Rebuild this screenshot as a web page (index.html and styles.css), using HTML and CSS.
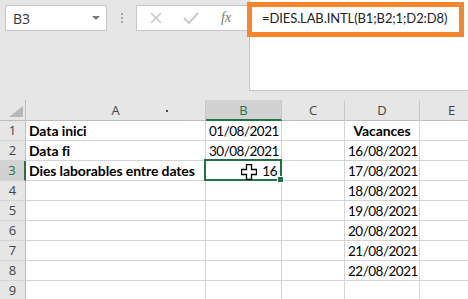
FILE: index.html
```html
<!DOCTYPE html>
<html lang="ca">
<head>
  <meta charset="UTF-8">
  <title>Dies laborables</title>
  <link rel="stylesheet" href="styles.css">
</head>
<body>
  <div class="toolbar">
    <div class="name-box">
      <span>B3</span>
      <span class="caret"></span>
    </div>
    <div class="grip"><i></i><i></i><i></i></div>
    <div class="fx-box">
      <svg class="icon" width="12" height="12" viewBox="0 0 12 12"><path d="M1 1 L11 11 M11 1 L1 11" stroke="#c8c8c8" stroke-width="1.6" fill="none"/></svg>
      <svg class="icon" width="16" height="12" viewBox="0 0 16 12"><path d="M1 6 L6 11 L15 1" stroke="#c8c8c8" stroke-width="2" fill="none"/></svg>
      <span class="fx">fx</span>
    </div>
    <div class="formula">=DIES.LAB.INTL(B1;B2;1;D2:D8)</div>
    <div class="highlight"></div>
  </div>

  <div class="sheet">
    <div class="corner"><svg width="14" height="11" viewBox="0 0 14 11"><path d="M14 0 L14 11 L0 11 Z" fill="#b7b7b7"/></svg></div>
    <div class="col-head">A<span class="speck"></span></div>
    <div class="col-head active">B</div>
    <div class="col-head">C</div>
    <div class="col-head">D</div>
    <div class="col-head">E</div>

    <div class="row-head">1</div>
    <div class="cell bold">Data inici</div>
    <div class="cell num">01/08/2021</div>
    <div class="cell"></div>
    <div class="cell bold center">Vacances</div>
    <div class="cell"></div>

    <div class="row-head">2</div>
    <div class="cell bold">Data fi</div>
    <div class="cell num">30/08/2021</div>
    <div class="cell"></div>
    <div class="cell num">16/08/2021</div>
    <div class="cell"></div>

    <div class="row-head active">3</div>
    <div class="cell bold">Dies laborables entre dates</div>
    <div class="cell num selected">
      <svg class="cursor" width="16" height="16" viewBox="0 0 16 16"><path d="M5.5 0.5 H10.5 V5.5 H15.5 V10.5 H10.5 V15.5 H5.5 V10.5 H0.5 V5.5 H5.5 Z" fill="#fff" stroke="#000" stroke-width="1.3"/></svg>
      16
    </div>
    <div class="cell"></div>
    <div class="cell num">17/08/2021</div>
    <div class="cell"></div>

    <div class="row-head">4</div>
    <div class="cell"></div>
    <div class="cell"></div>
    <div class="cell"></div>
    <div class="cell num">18/08/2021</div>
    <div class="cell"></div>

    <div class="row-head">5</div>
    <div class="cell"></div>
    <div class="cell"></div>
    <div class="cell"></div>
    <div class="cell num">19/08/2021</div>
    <div class="cell"></div>

    <div class="row-head">6</div>
    <div class="cell"></div>
    <div class="cell"></div>
    <div class="cell"></div>
    <div class="cell num">20/08/2021</div>
    <div class="cell"></div>

    <div class="row-head">7</div>
    <div class="cell"></div>
    <div class="cell"></div>
    <div class="cell"></div>
    <div class="cell num">21/08/2021</div>
    <div class="cell"></div>

    <div class="row-head">8</div>
    <div class="cell"></div>
    <div class="cell"></div>
    <div class="cell"></div>
    <div class="cell num">22/08/2021</div>
    <div class="cell"></div>

    <div class="row-head">9</div>
    <div class="cell"></div>
    <div class="cell"></div>
    <div class="cell"></div>
    <div class="cell"></div>
    <div class="cell"></div>
  </div>
</body>
</html>
```

FILE: styles.css
```css
body {
  margin: 0;
  width: 468px;
  height: 299px;
  overflow: hidden;
  background-color: #e6e6e6;
  font-family: 'Lato', 'Liberation Sans', sans-serif;
  color: #000;
}
.toolbar {
  position: relative;
  display: flex;
  align-items: flex-start;
  height: 100px;
}
.name-box {
  display: flex;
  align-items: center;
  justify-content: space-between;
  box-sizing: border-box;
  width: 102px;
  height: 26px;
  margin: 5px 0 0 5px;
  padding: 0 6px 0 7px;
  background-color: #fff;
  border: 1px solid #c6c6c6;
  font-family: 'Open Sans', sans-serif;
  font-size: 14px;
  color: #333;
}
.caret {
  width: 0;
  height: 0;
  border-left: 4px solid transparent;
  border-right: 4px solid transparent;
  border-top: 4px solid #7a7a7a;
}
.grip {
  display: flex;
  flex-direction: column;
  gap: 2px;
  margin: 13px 13px 0 14px;
}
.grip i {
  width: 2px;
  height: 2px;
  background-color: #a6a6a6;
}
.fx-box {
  display: flex;
  align-items: center;
  gap: 21px;
  box-sizing: border-box;
  width: 113px;
  height: 26px;
  margin-top: 5px;
  padding-left: 13px;
  background-color: #fff;
  border: 1px solid #c6c6c6;
  border-right: none;
}
.fx {
  font-family: 'Liberation Serif', serif;
  font-style: italic;
  font-size: 14px;
  color: #777;
  margin-left: 1px;
}
.formula {
  flex: 1;
  box-sizing: border-box;
  height: 91px;
  padding: 10px 0 0 12px;
  background-color: #fff;
  border-left: 1px solid #c6c6c6;
  border-bottom: 1px solid #c6c6c6;
  font-size: 13px;
  letter-spacing: -0.1px;
  color: #222;
}
.highlight {
  position: absolute;
  left: 247px;
  top: 2px;
  width: 217px;
  height: 35px;
  box-sizing: border-box;
  border: 5px solid #f7852b;
}
.sheet {
  display: grid;
  grid-template-columns: 26px 180px 76px 63px 75px 64px;
  grid-template-rows: 21px repeat(9, 20px);
  font-size: 14px;
}
.corner, .col-head, .row-head {
  box-sizing: border-box;
  background-color: #e6e6e6;
  color: #444;
  font-family: 'Open Sans', sans-serif;
  font-size: 13px;
  text-align: center;
}
.corner {
  display: flex;
  align-items: flex-end;
  justify-content: flex-end;
  padding: 0 2px 3px 0;
  border-right: 1px solid #bdbdbd;
  border-bottom: 1px solid #bdbdbd;
}
.col-head {
  position: relative;
  line-height: 20px;
  border-right: 1px solid #c8c8c8;
  border-bottom: 1px solid #bdbdbd;
}
.col-head.active {
  background-color: #d2d2d2;
  color: #217346;
  border-bottom: 2px solid #217346;
}
.speck {
  position: absolute;
  top: 10px;
  left: 140px;
  width: 2px;
  height: 2px;
  background-color: #444;
}
.row-head {
  line-height: 19px;
  border-right: 1px solid #bdbdbd;
  border-bottom: 1px solid #d4d4d4;
}
.row-head.active {
  background-color: #d2d2d2;
  color: #217346;
  border-right: 2px solid #217346;
}
.cell {
  box-sizing: border-box;
  background-color: #fff;
  border-right: 1px solid #d4d4d4;
  border-bottom: 1px solid #d4d4d4;
  padding: 1px 3px 0;
  line-height: 18px;
  white-space: nowrap;
}
.bold {
  font-weight: bold;
  letter-spacing: -0.1px;
}
.center {
  text-align: center;
}
.num {
  text-align: right;
  font-size: 13.5px;
  letter-spacing: -0.5px;
  padding-right: 4px;
}
.selected {
  position: relative;
}
.selected::before {
  content: "";
  position: absolute;
  top: -2px;
  left: -2px;
  right: -1px;
  bottom: -1px;
  border: 2px solid #217346;
}
.selected::after {
  content: "";
  position: absolute;
  right: -3px;
  bottom: -3px;
  width: 5px;
  height: 5px;
  background-color: #217346;
  border: 1px solid #fff;
}
.cursor {
  position: absolute;
  left: 35px;
  top: 3px;
}
```
